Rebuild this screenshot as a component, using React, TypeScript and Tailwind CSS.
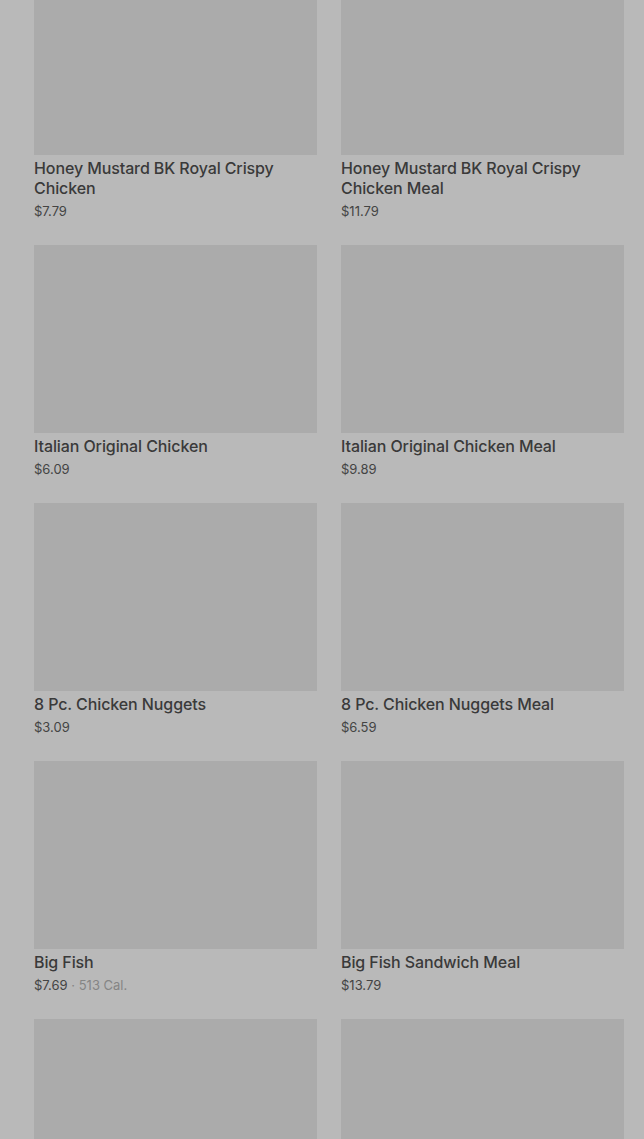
type Item = { name: string; price: string; cal?: string };

const items: Item[] = [
  { name: "Honey Mustard BK Royal Crispy Chicken", price: "$7.79" },
  { name: "Honey Mustard BK Royal Crispy Chicken Meal", price: "$11.79" },
  { name: "Italian Original Chicken", price: "$6.09" },
  { name: "Italian Original Chicken Meal", price: "$9.89" },
  { name: "8 Pc. Chicken Nuggets", price: "$3.09" },
  { name: "8 Pc. Chicken Nuggets Meal", price: "$6.59" },
  { name: "Big Fish", price: "$7.69", cal: "513 Cal." },
  { name: "Big Fish Sandwich Meal", price: "$13.79" },
];

const MenuCard = ({ item }: { item: Item }) => {
  return (
    <div className="flex flex-col">
      <div className="h-[188px] w-full bg-[#ababab]" />
      <div className="pt-[3px] text-[16px] leading-[20px] font-medium text-[#3a3a3a] tracking-[-0.1px]">
        {item.name}
      </div>
      <div className="mt-[3px] text-[13px] leading-[20px] text-[#444444]">
        {item.price}
        {item.cal && <span className="text-[#858585]"> · {item.cal}</span>}
      </div>
    </div>
  );
};

export default function App() {
  return (
    <div
      className="h-[1139px] overflow-hidden bg-[#b9b9b9]"
      style={{ fontFamily: "Inter, 'Liberation Sans', sans-serif" }}
    >
      <div className="-mt-[33px] grid grid-cols-2 gap-6 pl-[34px] pr-5">
        {items.map((item) => (
          <MenuCard key={item.name} item={item} />
        ))}
        {/* next row, images only visible in view */}
        <div className="h-[188px] bg-[#ababab]" />
        <div className="h-[188px] bg-[#ababab]" />
      </div>
    </div>
  );
}
